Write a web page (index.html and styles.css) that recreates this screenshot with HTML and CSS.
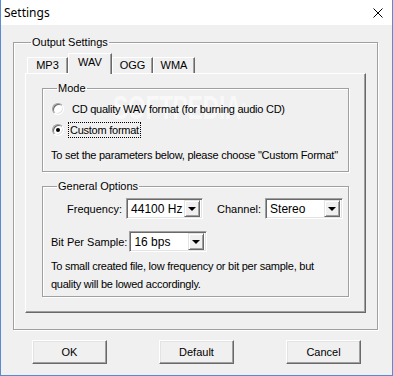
FILE: index.html
```html
<!DOCTYPE html>
<html lang="en">
<head>
  <meta charset="UTF-8" />
  <title>Settings</title>
  <link rel="stylesheet" href="styles.css">
</head>
<body>
  <div class="window">
    <div class="titlebar">
      <span class="title">Settings</span>
      <svg class="close" width="10" height="10" viewBox="0 0 10 10">
        <path d="M0.5 0.5 L9.5 9.5 M9.5 0.5 L0.5 9.5" stroke="#000" stroke-width="1" fill="none"/>
      </svg>
    </div>
    <div class="client">
      <fieldset class="group outer">
        <legend>Output Settings</legend>
        <div class="tabs">
          <div class="tab tab-mp3">MP3</div>
          <div class="tab tab-wav active">WAV</div>
          <div class="tab tab-ogg">OGG</div>
          <div class="tab tab-wma">WMA</div>
        </div>
        <div class="panel">
          <fieldset class="group mode">
            <legend>Mode</legend>
            <div class="mode-body">
              <span class="watermark">SOFTPEDIA<sup>®</sup></span>
              <div class="radio-row">
                <span class="radio"></span>
                <span class="radio-text">CD quality WAV format (for burning audio CD)</span>
              </div>
              <div class="radio-row">
                <span class="radio checked"></span>
                <span class="radio-text focus">Custom format</span>
              </div>
              <p class="hint">To set the parameters below, please choose "Custom Format"</p>
            </div>
          </fieldset>
          <fieldset class="group general">
            <legend>General Options</legend>
            <div class="opt-row first">
              <label class="lbl-freq">Frequency:</label>
              <div class="combo combo-freq"><span>44100 Hz</span><i class="drop"></i></div>
              <label class="lbl-chan">Channel:</label>
              <div class="combo combo-chan"><span>Stereo</span><i class="drop"></i></div>
            </div>
            <div class="opt-row second">
              <label class="lbl-bits">Bit Per Sample:</label>
              <div class="combo combo-bits"><span>16 bps</span><i class="drop"></i></div>
            </div>
            <p class="note">To small created file, low frequency or bit per sample, but<br>quality will be lowed accordingly.</p>
          </fieldset>
        </div>
      </fieldset>
      <div class="buttons">
        <button class="btn">OK</button>
        <button class="btn">Default</button>
        <button class="btn">Cancel</button>
      </div>
    </div>
  </div>
</body>
</html>
```

FILE: styles.css
```css
* {margin: 0; padding: 0; box-sizing: border-box;}
body {width: 393px; height: 376px; overflow: hidden; font-family: 'Liberation Sans', Arial, sans-serif; font-size: 11px; color: #000; background: #f0f0f0;}

/* Window frame */
.window {width: 393px; height: 376px; border: 1px solid #5b8ad0; border-top: none; background: #f0f0f0; display: flex; flex-direction: column;}
.titlebar {height: 25px; background: #fff; display: flex; align-items: center; justify-content: space-between; padding: 0 9px 0 3px;}
.title {font-family: 'Noto Sans', 'Open Sans', sans-serif; font-size: 12px;}
.close {margin-top: 1px;}
.client {flex: 1; padding: 10px 0 0 12px;}

/* Group boxes */
.group {border: 1px solid #a0a0a0; box-shadow: inset 1px 1px #fff, 1px 1px #fff; min-inline-size: 0;}
.group legend {padding: 0 1px; line-height: 14px; height: 14px;}
.outer {width: 365px; height: 295px; padding: 4px 11px 0 11px;}
.outer legend {margin-left: 6px;}

/* Tabs */
.tabs {display: flex; align-items: flex-end; height: 20px; padding-left: 2px;}
.tab {height: 16px; line-height: 15px; text-align: center; border: 1px solid #fff; border-bottom: none; border-right-color: #696969; box-shadow: inset -1px 0 #a0a0a0;}
.tab-mp3 {width: 41px;}
.tab-wav {width: 44px;}
.tab-ogg {width: 41px;}
.tab-wma {width: 42px;}
.tab.active {height: 21px; line-height: 17px; margin-bottom: -1px; background: #f0f0f0; position: relative; z-index: 1;}

.panel {height: 240px; border: 1px solid; border-color: #fff #696969 #696969 #fff; box-shadow: inset -1px -1px #a0a0a0; padding: 0 16px;}

/* Mode */
.mode {margin-top: 7px; height: 91px; padding: 0 0 0 8px;}
.mode legend {margin-left: 6px;}
.mode-body {position: relative;}
.radio-row {display: flex; align-items: center; height: 16px; margin-top: 6px; position: relative;}
.radio-row + .radio-row {margin-top: 5px;}
.radio {width: 12px; height: 12px; border-radius: 50%; background: #fff; border: 1px solid; border-color: #a0a0a0 #fff #fff #a0a0a0; box-shadow: inset 1px 1px #696969, inset -1px -1px #e3e3e3; margin-left: 1px; display: flex; align-items: center; justify-content: center;}
.radio.checked::after {content: ""; width: 4px; height: 4px; border-radius: 50%; background: #000;}
.radio-text {margin-left: 6px; line-height: 14px; padding: 0 1px; border: 1px solid transparent; letter-spacing: -0.25px;}
.radio-text.focus {border: 1px dotted #000; margin-left: 4px;}
.hint {margin-top: 11px; line-height: 13px; letter-spacing: -0.25px; white-space: nowrap;}
.watermark {position: absolute; left: 62px; top: -13px; font-size: 34px; line-height: 39px; font-weight: bold; transform: scaleX(0.66); transform-origin: left top; color: rgba(255, 255, 255, 0.6); pointer-events: none; white-space: nowrap;}
.watermark sup {font-size: 10px; vertical-align: top;}

/* General options */
.general {margin-top: 7px; height: 118px; padding: 0 0 0 8px;}
.general legend {margin-left: 6px;}
.opt-row {display: flex; align-items: center;}
.opt-row.first {margin-top: 5px;}
.opt-row.second {margin-top: 12px;}
.lbl-freq {margin-left: 16px; margin-right: 4px;}
.lbl-chan {margin-left: 14px; margin-right: 4px;}
.lbl-bits {margin-right: 2px;}
.combo {height: 21px; border: 1px solid; border-color: #a0a0a0 #fff #fff #a0a0a0; box-shadow: inset 1px 1px #696969, inset -1px -1px #e3e3e3; display: flex; align-items: center; justify-content: space-between; padding: 2px; background: #fff;}
.combo span {padding-left: 2px; font-size: 12px;}
.combo-freq {width: 77px;}
.combo-chan {width: 78px;}
.combo-bits {width: 78px;}
.drop {width: 16px; height: 17px; background: #f0f0f0; border: 1px solid; border-color: #e3e3e3 #696969 #696969 #e3e3e3; box-shadow: inset 1px 1px #fff, inset -1px -1px #a0a0a0; display: flex; align-items: center; justify-content: center;}
.drop::after {content: ""; border-left: 4px solid transparent; border-right: 4px solid transparent; border-top: 4px solid #000; margin-top: 1px;}
.note {margin-top: 5px; line-height: 18px; letter-spacing: -0.25px;}

/* Buttons */
.buttons {display: flex; justify-content: space-between; padding: 10px 31px 0 19px;}
.btn {width: 75px; height: 24px; font-family: inherit; font-size: 11px; background: #f0f0f0; border: 1px solid; border-color: #fff #696969 #696969 #fff; box-shadow: inset -1px -1px #a0a0a0, inset 1px 1px #e3e3e3;}
```
